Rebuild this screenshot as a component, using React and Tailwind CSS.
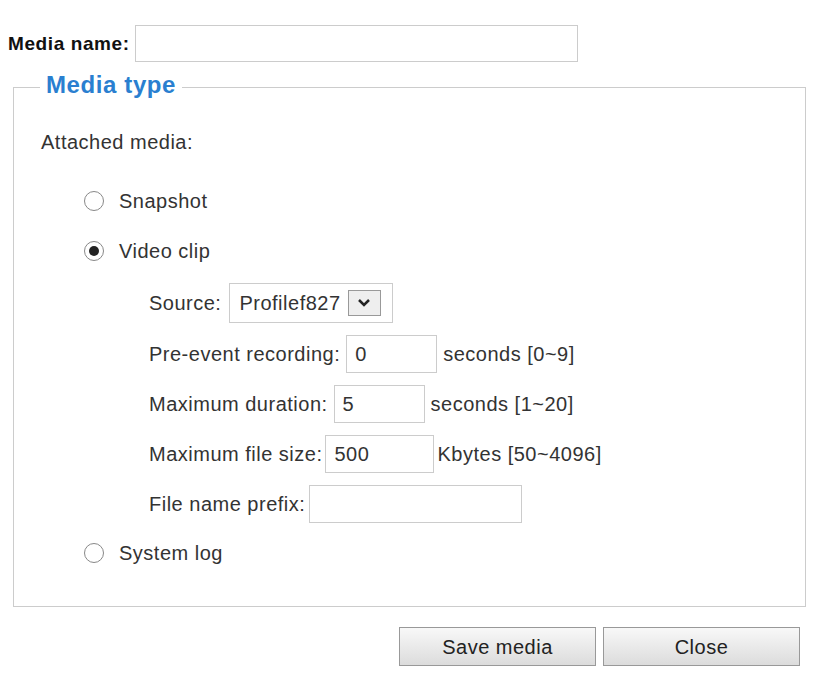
import React from "react";

const Radio = ({ checked }) => (
  <span className="w-[20px] h-[20px] rounded-full border border-[#888] bg-white flex items-center justify-center shrink-0">
    {checked && <span className="w-[10px] h-[10px] rounded-full bg-[#222]" />}
  </span>
);

const Box = ({ w, value }) => (
  <div className={`${w} h-[38px] border border-[#ccc] bg-white flex items-center px-[8px] shrink-0`}>{value}</div>
);

export default function App() {
  return (
    <div className="w-[815px] h-[673px] bg-white text-[20px] tracking-[0.5px] leading-[24px] text-[#333] relative" style={{ fontFamily: '"Liberation Sans", Arial, sans-serif' }}>
      <div className="flex items-center pt-[25px] pl-[8px] gap-[5px]">
        <span className="font-bold text-[#111] text-[19px] tracking-[0.6px]">Media name:</span>
        <div className="w-[443px] h-[37px] border border-[#ccc]" />
      </div>

      <div className="ml-[13px] mt-[25px] w-[793px] h-[520px] border border-[#ccc] relative">
        <span className="absolute -top-[15px] left-[26px] bg-white px-[6px] font-bold text-[24px] tracking-[0.6px] text-[#2a7fd0]">Media type</span>
        <div className="pl-[27px] pt-[42px]">Attached media:</div>
        <div className="pl-[70px] pt-[35px] flex flex-col gap-[26px]">
          <div className="flex items-center gap-[15px]"><Radio />Snapshot</div>
          <div className="flex items-center gap-[15px]"><Radio checked />Video clip</div>
        </div>
        <div className="pl-[135px] pt-[20px] flex flex-col gap-[12px]">
          <div className="flex items-center gap-[8px]">
            <span>Source:</span>
            <div className="w-[164px] h-[40px] border border-[#ccc] flex items-center pl-[9px] gap-[7px]">
              Profilef827
              <span className="w-[33px] h-[26px] border border-[#999] bg-[#eee] flex items-center justify-center">
                <svg width="14" height="10" viewBox="0 0 14 10"><path d="M2 2l5 5 5-5" stroke="#222" strokeWidth="2.5" fill="none" /></svg>
              </span>
            </div>
          </div>
          <div className="flex items-center gap-[6px]">
            <span>Pre-event recording:</span><Box w="w-[91px]" value="0" /><span>seconds [0~9]</span>
          </div>
          <div className="flex items-center gap-[6px]">
            <span>Maximum duration:</span><Box w="w-[91px]" value="5" /><span>seconds [1~20]</span>
          </div>
          <div className="flex items-center gap-[3px]">
            <span>Maximum file size:</span><Box w="w-[109px]" value="500" /><span>Kbytes [50~4096]</span>
          </div>
          <div className="flex items-center gap-[4px]">
            <span>File name prefix:</span><Box w="w-[213px]" value="" />
          </div>
        </div>
        <div className="pl-[70px] pt-[18px] flex items-center gap-[15px]"><Radio />System log</div>
      </div>

      <div className="flex justify-end gap-[7px] pr-[15px] pt-[20px]">
        <button className="w-[197px] h-[39px] border border-[#999] bg-gradient-to-b from-[#f8f8f8] to-[#dcdcdc] text-[#222]">Save media</button>
        <button className="w-[197px] h-[39px] border border-[#999] bg-gradient-to-b from-[#f8f8f8] to-[#dcdcdc] text-[#222]">Close</button>
      </div>
    </div>
  );
}
